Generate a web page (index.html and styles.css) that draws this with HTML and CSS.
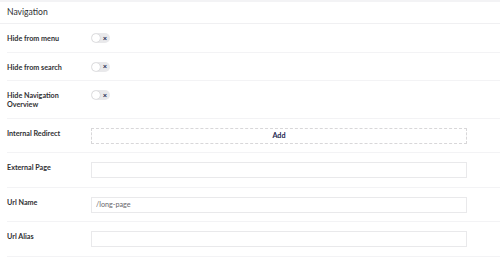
FILE: index.html
```html
<!DOCTYPE html>
<html lang="en">
<head>
    <meta charset="UTF-8">
    <title>Navigation</title>
    <link rel="stylesheet" href="styles.css">
</head>
<body>
    <div class="top-strip"></div>
    <section class="panel">
        <div class="panel-header">Navigation</div>

        <div class="prop-row">
            <div class="prop-label">Hide from menu</div>
            <div class="prop-editor">
                <span class="toggle"><span class="toggle-knob"></span><span class="toggle-x">&times;</span></span>
            </div>
        </div>

        <div class="prop-row">
            <div class="prop-label">Hide from search</div>
            <div class="prop-editor">
                <span class="toggle"><span class="toggle-knob"></span><span class="toggle-x">&times;</span></span>
            </div>
        </div>

        <div class="prop-row">
            <div class="prop-label">Hide Navigation Overview</div>
            <div class="prop-editor">
                <span class="toggle"><span class="toggle-knob"></span><span class="toggle-x">&times;</span></span>
            </div>
        </div>

        <div class="prop-row">
            <div class="prop-label">Internal Redirect</div>
            <div class="prop-editor">
                <button class="add-btn">Add</button>
            </div>
        </div>

        <div class="prop-row">
            <div class="prop-label">External Page</div>
            <div class="prop-editor">
                <input class="text-input" type="text" value="">
            </div>
        </div>

        <div class="prop-row">
            <div class="prop-label">Url Name</div>
            <div class="prop-editor">
                <input class="text-input" type="text" value="/long-page">
            </div>
        </div>

        <div class="prop-row">
            <div class="prop-label">Url Alias</div>
            <div class="prop-editor">
                <input class="text-input" type="text" value="">
            </div>
        </div>
    </section>
</body>
</html>
```

FILE: styles.css
```css
/* Global Styles */
* {
    margin: 0;
    padding: 0;
    box-sizing: border-box;
}

body {
    font-family: 'Lato', 'Open Sans', sans-serif;
    background-color: #fff;
    color: #1b264f;
}

.top-strip {
    height: 2px;
    background-color: #f3f3f5;
}

/* Panel */
.panel-header {
    height: 22px;
    line-height: 21px;
    padding: 0 7px;
    font-size: 8.6px;
    color: #303033;
    border-bottom: 1px solid #f0f0f2;
}

.prop-row {
    display: flex;
    margin-left: 7px;
    padding: 9px 0 8.5px;
    border-bottom: 1px solid #f3f3f5;
}

.prop-label {
    flex: 0 0 84px;
    padding-right: 8px;
    padding-top: 1px;
    font-size: 7.2px;
    font-weight: 700;
    line-height: 9px;
    color: #303033;
}

.prop-editor {
    flex: 0 0 376px;
}

/* Toggle */
.toggle {
    display: flex;
    align-items: center;
    justify-content: space-between;
    width: 19px;
    height: 10px;
    padding: 0 3px 0 1px;
    border-radius: 5px;
    background-color: #e9e9eb;
}

.toggle-knob {
    width: 8px;
    height: 8px;
    border-radius: 50%;
    background-color: #fff;
    box-shadow: 0 0 1px rgba(0, 0, 0, 0.3);
}

.toggle-x {
    font-size: 7.5px;
    font-weight: 700;
    line-height: 7px;
    color: #1b264f;
}

/* Add button */
.add-btn {
    display: block;
    width: 376px;
    height: 16px;
    border: 1px dashed #d8d7d9;
    background: #fff;
    font-family: 'Lato', sans-serif;
    font-size: 7.2px;
    font-weight: 700;
    color: #1b264f;
    text-align: center;
}

/* Inputs */
.text-input {
    display: block;
    width: 376px;
    height: 16px;
    padding: 0 4px;
    border: 1px solid #e9e9eb;
    font-family: 'Lato', sans-serif;
    font-size: 7.2px;
    color: #68676b;
    outline: none;
}
```
